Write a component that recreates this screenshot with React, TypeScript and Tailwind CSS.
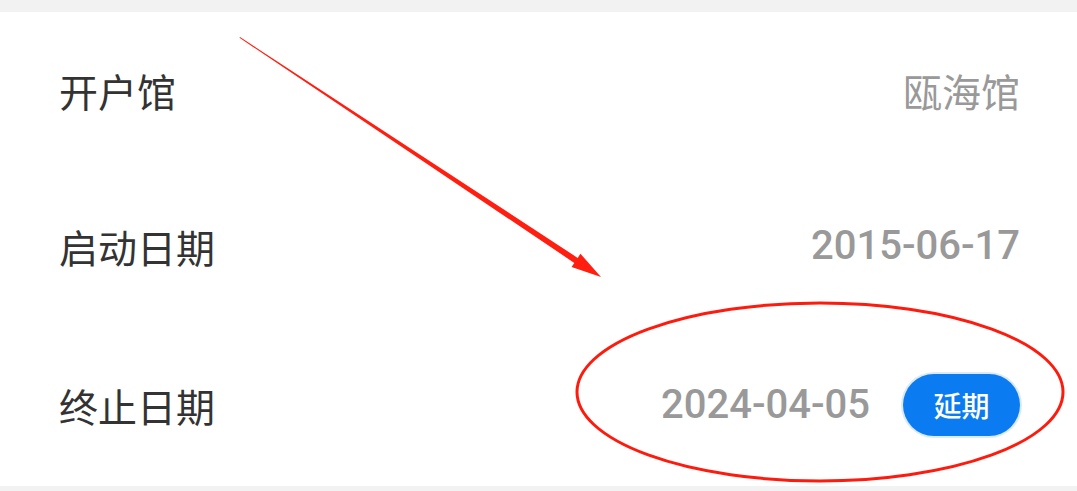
const rows = [
  { label: '开户馆', value: '瓯海馆', badge: false },
  { label: '启动日期', value: '2015-06-17', badge: false },
  { label: '终止日期', value: '2024-04-05', badge: true },
]

export default function App() {
  return (
    <div className="relative w-[1077px] h-[491px] bg-[#f2f2f2] overflow-hidden">
      <div className="mt-[12px] h-[474px] bg-white flex flex-col pl-[59px] pr-[57px]">
        {rows.map((r, i) => (
          <div
            key={r.label}
            className={`flex items-center justify-between ${i === 2 ? 'h-[162px]' : 'h-[156px]'}`}
          >
            <span className="text-[39px] text-[#333] font-['Noto_Sans_CJK_SC',sans-serif] leading-none">
              {r.label}
            </span>
            <div className="flex items-center gap-[33px]">
              <span
                className={
                  r.value.match(/\d/)
                    ? "text-[40px] font-medium text-[#999] font-['Roboto',sans-serif] leading-none"
                    : "text-[39px] text-[#999] font-['Noto_Sans_CJK_SC',sans-serif] leading-none"
                }
              >
                {r.value}
              </span>
              {r.badge && (
                <span className="w-[117px] h-[62px] rounded-full bg-[#0a7bf0] text-white text-[28px] font-medium flex items-center justify-center font-['Noto_Sans_CJK_SC',sans-serif] ring-2 ring-[#dbeaf8]">
                  延期
                </span>
              )}
            </div>
          </div>
        ))}
      </div>

      {/* annotations */}
      <svg className="absolute inset-0 pointer-events-none" width="1077" height="491" viewBox="0 0 1077 491">
        <polygon
          points="240,37 577.7,257.9 580.4,253.7 601,277 571.6,267.1 574.3,262.9 239.5,37.8"
          fill="#ff1e10"
        />
        <ellipse cx="820" cy="392" rx="243" ry="89" fill="none" stroke="#ff1a0e" strokeWidth="3" />
      </svg>
    </div>
  )
}
